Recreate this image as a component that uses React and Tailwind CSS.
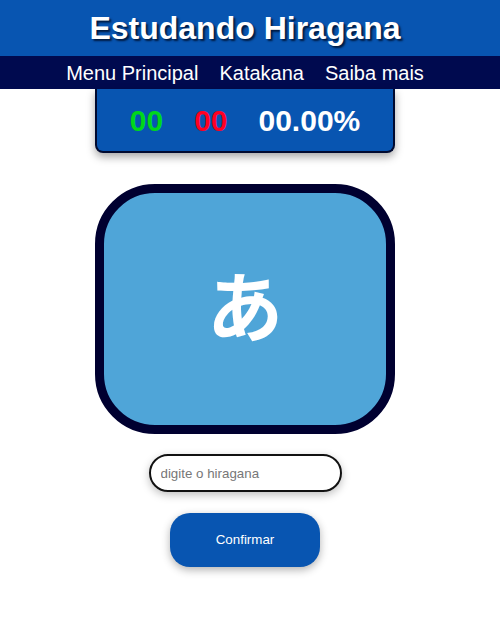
export default function App() {
  return (
    <div className="w-full min-h-screen bg-white flex flex-col font-['Liberation_Sans',Arial,sans-serif]">
      {/* Header */}
      <header className="w-full h-[56px] bg-[#0855b1] flex items-center justify-center pr-[10px]">
        <h1 className="text-[32px] font-bold text-white [text-shadow:2px_2px_2px_#001a40]">Estudando Hiragana</h1>
      </header>
      <nav className="w-full h-[33px] bg-[#000a4f] flex items-center justify-center gap-[21px] pr-[10px] text-white text-[20px]">
        <a>Menu Principal</a>
        <a>Katakana</a>
        <a>Saiba mais</a>
      </nav>

      <main className="flex flex-col items-center pr-[10px]">
        {/* Placar */}
        <div className="w-[300px] h-[64px] bg-[#0855b1] border-2 border-t-0 border-[#000a30] rounded-b-[8px] shadow-[0_4px_8px_rgba(0,0,0,0.35)] flex items-center justify-center gap-[31px] text-[30px] font-bold">
          <span className="text-[#00d71a]">00</span>
          <span className="text-[#ff0022]">00</span>
          <span className="text-white">00.00%</span>
        </div>

        {/* Card */}
        <div className="mt-[31px] w-[300px] h-[250px] bg-[#4fa5d8] border-[9px] border-[#000030] rounded-[60px] flex items-center justify-center">
          <span className="text-white text-[76px] font-bold font-['Noto_Sans_CJK_JP',sans-serif] leading-none -mt-[12px]">あ</span>
        </div>

        <input
          type="text"
          placeholder="digite o hiragana"
          className="mt-[20px] w-[193px] h-[38px] border-2 border-[#111] rounded-full px-[10px] text-[13.33px] text-black placeholder:text-[#777] shadow-[0_3px_8px_rgba(0,0,0,0.25)] outline-none"
        />

        <button className="mt-[21px] w-[150px] h-[54px] bg-[#0855b1] rounded-[20px] text-white text-[13.33px] font-medium shadow-[0_3px_8px_rgba(0,0,0,0.3)]">
          Confirmar
        </button>
      </main>
    </div>
  );
}
